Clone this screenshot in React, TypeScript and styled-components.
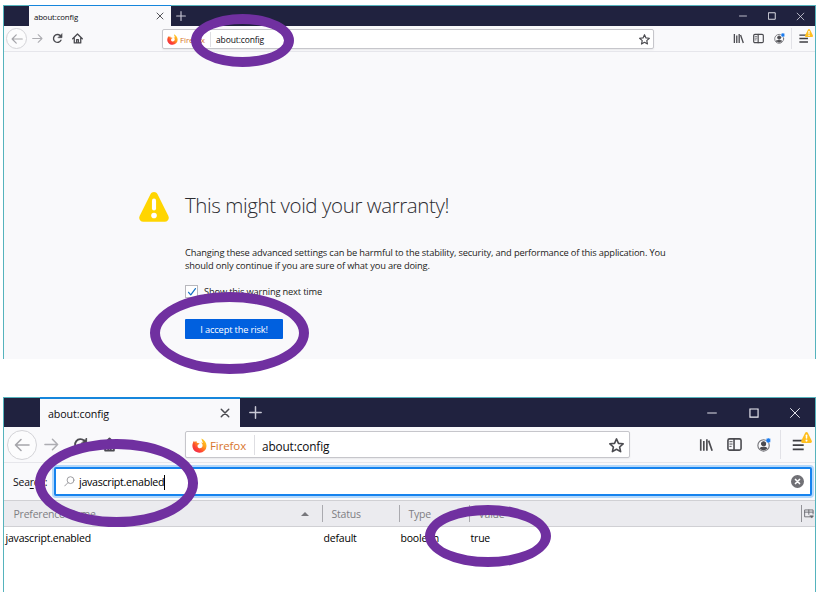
import React from 'react';
import styled, { createGlobalStyle } from 'styled-components';

const GlobalStyle = createGlobalStyle`
  * { box-sizing: border-box; }
  body { margin: 0; background: #fff; font-family: "Open Sans", "Noto Sans", sans-serif; }
  svg { display: block; flex: none; }
`;

type Size = { $large?: boolean };

const Page = styled.main`
  position: relative;
  width: 820px;
  height: 599px;
  padding: 5px 4px 0 3px;
  overflow: hidden;
  display: flex;
  flex-direction: column;
  gap: 38px;
  background: #fff;
`;

const Window = styled.section<Size>`
  width: 813px;
  height: ${p => (p.$large ? 195 : 354)}px;
  border: solid #55b3bd;
  border-width: 1px 1px 0;
  background: ${p => (p.$large ? '#fff' : '#f9f9fb')};
  display: flex;
  flex-direction: column;
`;

const TitleBar = styled.div<Size>`
  height: ${p => (p.$large ? 29 : 20)}px;
  flex: none;
  padding-left: ${p => (p.$large ? 36 : 25)}px;
  background: #20223f;
  display: flex;
`;

const Tab = styled.div<Size>`
  width: ${p => (p.$large ? 200 : 142)}px;
  margin-top: -1px;
  padding: 0 ${p => (p.$large ? '10px 0 8px' : '7px 0 5px')};
  border-top: ${p => (p.$large ? 2 : 1.5)}px solid #1686dc;
  background: #f9f9fb;
  display: flex;
  align-items: center;
  justify-content: space-between;
`;

const TabTitle = styled.span<Size>`
  padding-top: 1px;
  color: #0c0c10;
  font-size: ${p => (p.$large ? 10.7 : 7.8)}px;
  letter-spacing: ${p => (p.$large ? -0.11 : -0.12)}px;
  line-height: 14px;
`;

const NewTab = styled.div<Size>`
  width: ${p => (p.$large ? 31 : 20)}px;
  display: grid;
  place-items: center;
`;

const Controls = styled.div<Size>`
  margin-left: auto;
  display: grid;
  grid-template-columns: ${p => (p.$large ? '42px 41px 41px' : '29px 29px 29px')};
  place-items: center;
`;

const Toolbar = styled.div<Size>`
  height: ${p => (p.$large ? 36 : 26)}px;
  flex: none;
  background: #f9f9fb;
  border-bottom: 1px solid #e6e6eb;
  display: grid;
  grid-template-columns: ${p => (p.$large
    ? '36px 23px 34px 24px 64px 445px 62px 28px 29px 29px 2px 35px'
    : '25px 16px 25px 15px 77px 492px 74px 20px 21px 20px 2px 24px')};
  align-items: center;
`;

const Slot = styled.div`
  display: grid;
  place-items: center;
`;

const BackButton = styled.div<Size>`
  width: ${p => (p.$large ? 30 : 21)}px;
  height: ${p => (p.$large ? 30 : 21)}px;
  margin: auto;
  border: 1px solid #d4d4d8;
  border-radius: 50%;
  background: #fcfcfd;
  display: grid;
  place-items: center;
`;

const MenuSlot = styled.div<Size>`
  position: relative;
  height: ${p => (p.$large ? 29 : 21)}px;
  border-left: 1px solid #e2e2e7;
  display: grid;
  place-items: center;
`;

const WarningBadge = styled.div<Size>`
  position: absolute;
  right: ${p => (p.$large ? 3 : 2)}px;
  top: ${p => (p.$large ? 2 : 1)}px;
`;

const UrlBar = styled.div<Size>`
  height: ${p => (p.$large ? 27 : 20)}px;
  padding: 1px ${p => (p.$large ? 5 : 3)}px 0 ${p => (p.$large ? 6 : 4)}px;
  border: 1px solid #c6c6cb;
  border-radius: 2px;
  background: #fff;
  box-shadow: 0 1px 2px rgba(0, 0, 0, 0.07);
  display: flex;
  align-items: center;
`;

const Identity = styled.div<Size>`
  width: ${p => (p.$large ? 63 : 44)}px;
  height: ${p => (p.$large ? 20 : 15)}px;
  border-right: 1px solid #dedee2;
  display: flex;
  align-items: center;
  gap: ${p => (p.$large ? 3 : 2)}px;
  color: #d8752d;
  font-size: ${p => (p.$large ? 11.5 : 8)}px;
  letter-spacing: -0.1px;
`;

const Url = styled.span<Size>`
  flex: 1;
  padding: 1px 0 0 ${p => (p.$large ? 7 : 5)}px;
  color: #0c0c10;
  font-size: ${p => (p.$large ? 11.8 : 8.5)}px;
  letter-spacing: -0.12px;
`;

const Warning = styled.div`
  width: 680px;
  padding: 140px 0 0 135px;
  display: grid;
  grid-template-columns: 30px 1fr;
  column-gap: 16px;
  align-items: start;
`;

const WarningText = styled.div`
  display: flex;
  flex-direction: column;
  align-items: flex-start;
`;

const Heading = styled.h1`
  margin: -2px 0 0;
  color: #2c2c31;
  font-size: 20.5px;
  font-weight: 300;
  line-height: 30px;
  letter-spacing: -0.41px;
`;

const Copy = styled.p`
  margin: 27px 0 0;
  color: #1c1c21;
  font-size: 9.3px;
  line-height: 12.5px;
  letter-spacing: -0.16px;
  white-space: nowrap;
`;

const CheckRow = styled.label`
  margin-top: 13px;
  height: 13px;
  display: flex;
  align-items: center;
  gap: 6px;
  color: #1c1c21;
  font-size: 9.3px;
  letter-spacing: -0.17px;
`;

const CheckBox = styled.span`
  width: 13px;
  height: 13px;
  border: 1px solid #b8b8bd;
  background: #fff;
  display: grid;
  place-items: center;
`;

const AcceptButton = styled.button`
  width: 98px;
  height: 20px;
  margin-top: 21px;
  padding: 0;
  border: 0;
  border-radius: 1px;
  background: #0060df;
  color: #fff;
  font: 9.3px "Open Sans", sans-serif;
  letter-spacing: -0.16px;
`;

const SearchRow = styled.div`
  height: 37px;
  flex: none;
  padding: 0 3px 0 9px;
  background: #f9f9fb;
  display: flex;
  align-items: center;
`;

const SearchLabel = styled.span`
  width: 41px;
  font-size: 10.4px;
  letter-spacing: -0.2px;
  color: #0c0c10;
`;

const AccessKey = styled.u`
  text-underline-offset: 2px;
`;

const SearchField = styled.div`
  flex: 1;
  height: 29px;
  padding: 0 6px 0 8px;
  border: 2px solid #1683ee;
  border-radius: 2px;
  background: #fff;
  box-shadow: 0 0 0 2px #b3d8fb;
  display: flex;
  align-items: center;
`;

const Query = styled.span`
  height: 15px;
  margin: 1px auto 0 4px;
  border-right: 1px solid #000;
  color: #000;
  font-size: 10.7px;
  line-height: 15px;
  letter-spacing: -0.3px;
`;

const columns = '318px 77px 70px 1fr 14px';

const HeaderRow = styled.div`
  height: 27px;
  flex: none;
  border: solid #d0d0d4;
  border-width: 1px 0;
  background: #ebebef;
  display: grid;
  grid-template-columns: ${columns};
  align-items: center;
`;

const HeaderCell = styled.div<{ $first?: boolean }>`
  height: 17px;
  padding: ${p => (p.$first ? '0 13px 0 9.5px' : '0 0 0 8.5px')};
  border-left: ${p => (p.$first ? 0 : 1)}px solid #aaaaaf;
  display: flex;
  align-items: center;
  justify-content: space-between;
  color: #7e7e83;
  font-size: 10.5px;
  letter-spacing: -0.22px;
`;

const Picker = styled.div`
  height: 17px;
  padding-left: 2px;
  border-left: 1px solid #929297;
  display: flex;
  align-items: center;
`;

const DataRow = styled.div`
  height: 22px;
  display: grid;
  grid-template-columns: ${columns};
  align-items: center;
  color: #000;
  font-size: 10.5px;
  letter-spacing: -0.2px;
`;

const DataCell = styled.span`
  padding-left: 1.5px;
`;

const Ring = styled.div<{ $x: number; $y: number; $w: number; $h: number }>`
  position: absolute;
  left: ${p => p.$x}px;
  top: ${p => p.$y}px;
  width: ${p => p.$w}px;
  height: ${p => p.$h}px;
  border: 10px solid #7030a0;
  border-radius: 50%;
`;

const Glyph = ({ size, color = '#4b4b50', width = 1.8, children }: { size: number; color?: string; width?: number; children: React.ReactNode }) => (
  <svg width={size} height={size} viewBox="0 0 16 16" fill="none" stroke={color} strokeWidth={width} strokeLinecap="round" strokeLinejoin="round">
    {children}
  </svg>
);

const FirefoxLogo = ({ size }: { size: number }) => (
  <svg width={size} height={size} viewBox="0 0 16 16">
    <defs>
      <linearGradient id={`flame${size}`} x1="1" y1="0" x2="0.2" y2="1">
        <stop offset="0" stopColor="#ffe226" />
        <stop offset="0.45" stopColor="#ff9a1f" />
        <stop offset="0.75" stopColor="#ff4433" />
        <stop offset="1" stopColor="#ee2455" />
      </linearGradient>
    </defs>
    <path fill={`url(#flame${size})`} d="M10.2.5c2.9 1.7 5.3 4.2 5.3 7.9A7.3 7.3 0 0 1 8 15.6C3.7 15.6.5 12.5.5 8.3c0-2 .7-3.8 1.7-5.3l.5 1.6c.6-.7 1.3-1.2 2.1-1.4-.2 1 .3 1.8 1.2 2l2 .4c-.1.9-.9 1.1-1.8 1.6-.3.8-.4 1.5-.2 2.2.4 1 1.2 1.6 2.3 1.6 1.8 0 3-1.3 3-3.2 0-1.4-.8-2.4-1.8-3.1 1-.1 1.7.2 2.2.7-.2-1.7-1.7-2.7-1.5-4.9z" />
    <path fill="#f04a2a" opacity=".5" d="M2.3 3.2C1.3 4.8.7 6.4.7 8.3c0 2.8 1.6 5.2 4 6.4C3 12 2.400 9.400 3 6.600z" />
  </svg>
);

const AlertTriangle = ({ size, color }: { size: number; color: string }) => (
  <svg width={size} height={size} viewBox="0 0 16 16">
    <path fill={color} d="M8 0c.8 0 1.5.4 1.9 1.2l5.7 11.4c.8 1.6-.1 3.3-1.9 3.3H2.3c-1.8 0-2.7-1.7-1.9-3.3L6.1 1.2C6.5.4 7.2 0 8 0z" />
    <path stroke="#fff" strokeWidth="2.2" strokeLinecap="round" d="M8 4.6v4.2" />
    <circle cx="8" cy="12.5" r="1.5" fill="#fff" />
  </svg>
);

const CloseGlyph = ({ size, color, width }: { size: number; color?: string; width: number }) => (
  <Glyph size={size} color={color} width={width}><path d="M2 2l12 12M14 2L2 14" /></Glyph>
);

function Chrome({ large }: { large?: boolean }) {
  const s = (a: number, b: number) => (large ? b : a);
  const icon = s(11, 15);
  return (
    <>
      <TitleBar $large={large}>
        <Tab $large={large}>
          <TabTitle $large={large}>about:config</TabTitle>
          <CloseGlyph size={s(8, 10)} width={s(1.9, 2.3)} />
        </Tab>
        <NewTab $large={large}>
          <Glyph size={s(10, 13)} color="#c9c9d6" width={1.8}><path d="M8 1v14M1 8h14" /></Glyph>
        </NewTab>
        <Controls $large={large}>
          <Glyph size={s(8, 10)} color="#eeeef5" width={1.5}><path d="M1 8h14" /></Glyph>
          <Glyph size={s(8, 10)} color="#eeeef5" width={1.8}><path strokeLinejoin="miter" d="M1.5 1.5h13v13h-13z" /></Glyph>
          <CloseGlyph size={s(9, 12)} color="#e5e5ee" width={1.3} />
        </Controls>
      </TitleBar>
      <Toolbar $large={large}>
        <BackButton $large={large}>
          <Glyph size={s(12, 16)} color="#a5a5aa" width={1.6}><path d="M15 8H1.5M7 2.5L1.5 8 7 13.5" /></Glyph>
        </BackButton>
        <Slot><Glyph size={s(11, 15)} color="#adadb2" width={1.6}><path d="M1 8h13.5M9 2.5L14.5 8 9 13.5" /></Glyph></Slot>
        <Slot>
          <Glyph size={s(11, 15)} width={2}>
            <path d="M13 10.5A5.7 5.7 0 1 1 12 4" />
            <path fill="#4b4b50" strokeWidth="1" d="M14.5 1.5v5.3H9.2z" />
          </Glyph>
        </Slot>
        <Slot>
          <Glyph size={s(11, 15)} width={1.9}>
            <path d="M1 8.3L8 1.5l7 6.8M3.3 7v7.5h9.4V7M6.7 14.2V9.5h2.6v4.7" />
          </Glyph>
        </Slot>
        <span />
        <UrlBar $large={large}>
          <Identity $large={large}><FirefoxLogo size={s(11, 15)} />Firefox</Identity>
          <Url $large={large}>about:config</Url>
          <Glyph size={s(11, 15)} width={1.7}>
            <path d="M8 1l2.1 4.7 5 .5-3.800 3.400 1.100 5L8 12l-4.400 2.600 1.100-5L.9 6.200l5-.5z" />
          </Glyph>
        </UrlBar>
        <span />
        <Slot><Glyph size={s(11, 14)} width={1.9}><path strokeLinecap="butt" d="M2 1.5v13M5.5 3.5v11M9 1.5v13M11 3l4 11.5" /></Glyph></Slot>
        <Slot>
          <Glyph size={icon} width={1.7}>
            <rect x="1" y="2" width="14" height="12" rx="1.8" />
            <path d="M7.5 2v12" />
            <path strokeWidth="1" d="M3 5h2.5M3 7.5h2.5M3 10h1.5" />
          </Glyph>
        </Slot>
        <Slot>
          <Glyph size={s(11, 14)} width={1.3}>
            <circle cx="7.5" cy="8.5" r="6.5" stroke="#77777c" />
            <circle cx="7.5" cy="6.6" r="2.3" fill="#4b4b50" />
            <path fill="#4b4b50" d="M3.8 11.7c1-1.5 6.4-1.5 7.4 0-1.8 2.2-5.6 2.2-7.4 0z" />
            <circle cx="13" cy="2.9" r="2.8" fill="#1a7cf0" stroke="#f9f9fb" strokeWidth=".5" />
          </Glyph>
        </Slot>
        <span />
        <MenuSlot $large={large}>
          <Glyph size={s(11, 14)} color="#3f3f44" width={2}><path strokeLinecap="butt" d="M2 3h12.5M2 8h12.5M2 13h12.5" /></Glyph>
          <WarningBadge $large={large}><AlertTriangle size={s(8, 11)} color="#ffbf1f" /></WarningBadge>
        </MenuSlot>
      </Toolbar>
    </>
  );
}

export default function App() {
  return (
    <Page>
      <GlobalStyle />
      <Window>
        <Chrome />
        <Warning>
          <AlertTriangle size={30} color="#ffd500" />
          <WarningText>
            <Heading>This might void your warranty!</Heading>
            <Copy>
              Changing these advanced settings can be harmful to the stability, security, and performance of this application. You
              <br />
              should only continue if you are sure of what you are doing.
            </Copy>
            <CheckRow>
              <CheckBox><Glyph size={10} color="#1672c5" width={2}><path d="M2.5 8.5L6 12.5l7.5-10" /></Glyph></CheckBox>
              Show this warning next time
            </CheckRow>
            <AcceptButton>I accept the risk!</AcceptButton>
          </WarningText>
        </Warning>
      </Window>

      <Window $large>
        <Chrome large />
        <SearchRow>
          <SearchLabel>Sea<AccessKey>r</AccessKey>ch:</SearchLabel>
          <SearchField>
            <Glyph size={11} color="#929297" width={1.3}><circle cx="9.5" cy="6" r="5" /><path d="M5.8 9.7L1 14.5" /></Glyph>
            <Query>javascript.enabled</Query>
            <Glyph size={13} width={2}><circle cx="8" cy="8" r="7" fill="#717176" stroke="#717176" /><path stroke="#fff" d="M5.5 5.5l5 5M10.5 5.5l-5 5" /></Glyph>
          </SearchField>
        </SearchRow>
        <HeaderRow>
          <HeaderCell $first>
            Preference Name
            <svg width="8" height="4" viewBox="0 0 8 4"><path fill="#77777c" d="M0 4l4-4 4 4z" /></svg>
          </HeaderCell>
          <HeaderCell>Status</HeaderCell>
          <HeaderCell>Type</HeaderCell>
          <HeaderCell>Value</HeaderCell>
          <Picker>
            <Glyph size={10} color="#66666b" width={1.4}><path d="M9 12.5H1v-11h13.5V8M1 5h13.5M7.7 1.5v7" /><path fill="#66666b" d="M10 11h5l-2.5 3z" /></Glyph>
          </Picker>
        </HeaderRow>
        <DataRow>
          <DataCell>javascript.enabled</DataCell>
          <DataCell>default</DataCell>
          <DataCell>boolean</DataCell>
          <DataCell>true</DataCell>
        </DataRow>
      </Window>

      <Ring $x={191} $y={14} $w={103} $h={53} />
      <Ring $x={150} $y={292} $w={159} $h={82} />
      <Ring $x={34.5} $y={439} $w={163.5} $h={88} />
      <Ring $x={425} $y={505} $w={126} $h={62} />
    </Page>
  );
}
